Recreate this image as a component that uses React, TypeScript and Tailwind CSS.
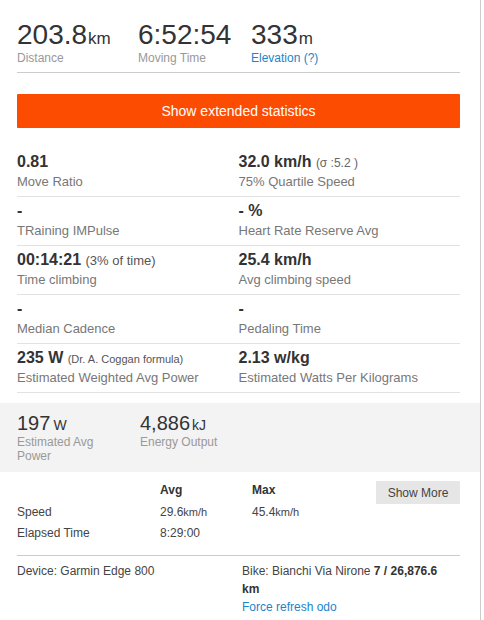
import React from 'react';

const topStats = [
  { value: '203.8', unit: 'km', label: 'Distance', width: 'w-[121px]' },
  { value: '6:52:54', unit: '', label: 'Moving Time', width: 'w-[113px]' },
  { value: '333', unit: 'm', label: 'Elevation (?)', width: 'w-[120px]', link: true },
];

type Cell = { value: React.ReactNode; label: string };

const rows: [Cell, Cell][] = [
  [
    { value: '0.81', label: 'Move Ratio' },
    {
      value: (
        <>
          32.0 km/h <span className="font-normal text-[12px] leading-none text-[#666]">(σ :5.2 )</span>
        </>
      ),
      label: '75% Quartile Speed',
    },
  ],
  [
    { value: '-', label: 'TRaining IMPulse' },
    { value: '- %', label: 'Heart Rate Reserve Avg' },
  ],
  [
    {
      value: (
        <>
          00:14:21 <span className="font-normal text-[13px] leading-none text-[#555]">(3% of time)</span>
        </>
      ),
      label: 'Time climbing',
    },
    { value: '25.4 km/h', label: 'Avg climbing speed' },
  ],
  [
    { value: '-', label: 'Median Cadence' },
    { value: '-', label: 'Pedaling Time' },
  ],
  [
    {
      value: (
        <>
          235 W <span className="font-normal text-[11px] leading-none text-[#555]">(Dr. A. Coggan formula)</span>
        </>
      ),
      label: 'Estimated Weighted Avg Power',
    },
    { value: '2.13 w/kg', label: 'Estimated Watts Per Kilograms' },
  ],
];

function StatCell({ cell }: { cell: Cell }) {
  return (
    <div className="pt-[4px] pb-[5px]">
      <div className="h-[20px] text-[16px] leading-[20px] font-bold text-[#333]">{cell.value}</div>
      <div className="mt-[1px] h-[18px] text-[13px] leading-[18px] text-[#777]">{cell.label}</div>
    </div>
  );
}

export default function App() {
  return (
    <div
      className="w-[481px] min-h-[620px] bg-white border-r border-[#ccc]"
      style={{ fontFamily: '"Liberation Sans", Arial, sans-serif' }}
    >
      {/* Headline stats */}
      <div className="pl-[17px] pr-[20px] pt-[20px]">
        <div className="flex border-b border-[#ccc] pb-[6px]">
          {topStats.map((s) => (
            <div key={s.label} className={s.width}>
              <div className="h-[30px] text-[28px] leading-[30px] text-[#333] whitespace-nowrap">
                {s.value}
                {s.unit && <span className="ml-[1px] text-[17px] leading-none">{s.unit}</span>}
              </div>
              <div
                className={`h-[16px] text-[12px] leading-[16px] ${s.link ? 'text-[#1a85c8]' : 'text-[#999]'}`}
              >
                {s.label}
              </div>
            </div>
          ))}
        </div>

        <button className="mt-[21px] h-[34px] w-full bg-[#fc4c02] text-white text-[14px] rounded-[1px]">
          Show extended statistics
        </button>

        {/* Extended stats grid */}
        <div className="mt-5">
          {rows.map((r, i) => (
            <div key={i} className="grid grid-cols-2 border-b border-[#e2e2e2]">
              <StatCell cell={r[0]} />
              <StatCell cell={r[1]} />
            </div>
          ))}
        </div>
      </div>

      {/* Power band */}
      <div className="mt-[10px] bg-[#f3f3f3] pl-[17px] pt-[9px] pb-[9px] flex">
        <div className="w-[123px] pr-[20px]">
          <div className="h-[23px] text-[20px] leading-[23px] text-[#333]">
            197<span className="ml-[3px] text-[14px] leading-none">W</span>
          </div>
          <div className="text-[12px] leading-[14px] text-[#999]">Estimated Avg Power</div>
        </div>
        <div className="w-[123px]">
          <div className="h-[23px] text-[20px] leading-[23px] text-[#333]">
            4,886<span className="ml-[2px] text-[14px] leading-none">kJ</span>
          </div>
          <div className="text-[12px] leading-[14px] text-[#999]">Energy Output</div>
        </div>
      </div>

      {/* Avg / Max table */}
      <div className="pl-[17px] pr-[20px] pt-[8px]">
        <div className="flex justify-between border-b border-[#ccc] pb-[10px]">
          <div className="grid grid-cols-[143px_92px_80px] auto-rows-[21.5px] text-[12px] leading-[21.5px] text-[#444]">
            <div></div>
            <div className="font-bold text-[#333]">Avg</div>
            <div className="font-bold text-[#333]">Max</div>
            <div>Speed</div>
            <div>
              29.6<span className="text-[11px] leading-none">km/h</span>
            </div>
            <div>
              45.4<span className="text-[11px] leading-none">km/h</span>
            </div>
            <div>Elapsed Time</div>
            <div>8:29:00</div>
            <div></div>
          </div>
          <button className="mt-[1px] h-[23px] w-[84px] bg-[#e6e6e6] text-[12px] text-[#444] rounded-[1px]">
            Show More
          </button>
        </div>

        {/* Device / bike */}
        <div className="flex pt-[6px] text-[12px] leading-[18px] text-[#444]">
          <div className="w-[225px]">Device: Garmin Edge 800</div>
          <div className="w-[208px]">
            <div>
              Bike: Bianchi Via Nirone <span className="font-bold text-[#333]">7 / 26,876.6 km</span>
            </div>
            <div className="text-[#1a85c8]">Force refresh odo</div>
          </div>
        </div>
      </div>
    </div>
  );
}
